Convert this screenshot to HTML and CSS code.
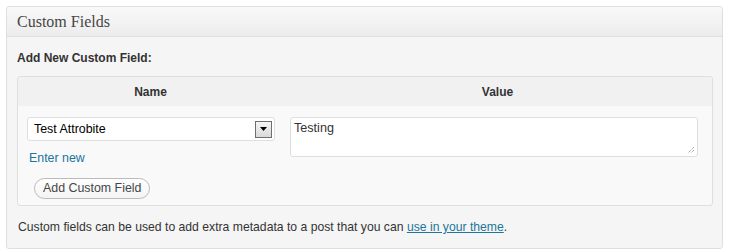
FILE: index.html
```html
<!DOCTYPE html>
<html>
<head>
<meta charset="utf-8">
<link rel="stylesheet" href="styles.css">
</head>
<body>
<div class="postbox">
  <h3 class="hndle">Custom Fields</h3>
  <div class="inside">
    <p class="add-new"><strong>Add New Custom Field:</strong></p>
    <div class="meta-table">
      <div class="thead">
        <div class="th name-col">Name</div>
        <div class="th value-col">Value</div>
      </div>
      <div class="tbody">
        <div class="name-col cell-left">
          <div class="select">
            <span class="select-text">Test Attrobite</span>
            <span class="select-btn"><svg width="8" height="5" viewBox="0 0 8 5"><path d="M0 0h7L3.5 4z" fill="#000"/></svg></span>
          </div>
          <a class="enter-new" href="#">Enter new</a>
          <span class="btn">Add Custom Field</span>
        </div>
        <div class="value-col cell-right">
          <div class="textarea">Testing
            <svg class="grip" width="8" height="8" viewBox="0 0 8 8"><path d="M7 1L1 7M7 4L4 7" stroke="#888" stroke-width="1" stroke-dasharray="1 1"/></svg>
          </div>
        </div>
      </div>
    </div>
    <p class="note">Custom fields can be used to add extra metadata to a post that you can <a href="#">use in your theme</a>.</p>
  </div>
</div>
</body>
</html>
```
FILE: styles.css
```css
html, body { margin: 0; padding: 0; background: #fff; }
body { padding: 6px 6px 0 6px; font-family: "Liberation Sans", Arial, sans-serif; color: #333; font-size: 13px; }
.postbox {
  width: 717px;
  border: 1px solid #dfdfdf;
  border-radius: 3px;
  background: #f5f5f5;
  box-sizing: border-box;
  height: 243px;
}
.hndle {
  margin: 0;
  height: 30px;
  box-sizing: border-box;
  padding: 6px 10px 0 10px;
  font-family: "Liberation Serif", Georgia, serif;
  font-weight: normal;
  font-size: 16px;
  color: #464646;
  background: linear-gradient(to bottom, #f9f9f9, #ececec);
  border-bottom: 1px solid #dfdfdf;
  border-radius: 3px 3px 0 0;
}
.inside { padding: 0 9px 0 10px; }
.add-new { margin: 13px 0 0 0; font-size: 12px; color: #333; line-height: 16px; }
.meta-table {
  margin-top: 10px;
  border: 1px solid #dfdfdf;
  border-radius: 3px;
  background: #f9f9f9;
  height: 130px;
  box-sizing: border-box;
}
.thead { display: flex; background: #f1f1f1; height: 29px; align-items: center; border-radius: 3px 3px 0 0; }
.th { text-align: center; font-weight: bold; font-size: 12px; color: #333; }
.name-col { width: 265px; flex: none; }
.value-col { flex: 1; }
.tbody { display: flex; padding-top: 11px; }
.cell-left { padding-left: 9px; box-sizing: border-box; display: flex; flex-direction: column; align-items: flex-start; }
.select {
  width: 248px; height: 24px; box-sizing: border-box;
  border: 1px solid #dfdfdf; border-radius: 3px; background: #fff;
  display: flex; align-items: center; justify-content: space-between;
  padding: 0 2px 0 6px; color: #000; font-size: 12.4px;
}
.select-btn {
  width: 17px; height: 17px; box-sizing: border-box;
  border: 1px solid #6f6f6f;
  background: linear-gradient(to bottom, #f5f5f5, #d9d9d9);
  display: flex; align-items: center; justify-content: center;
}
.enter-new { margin-top: 9px; margin-left: 2px; color: #21759b; text-decoration: none; font-size: 12.4px; line-height: 16px; }
.btn {
  margin-top: 12px; margin-left: 7px;
  display: inline-block; height: 21px; box-sizing: border-box;
  border: 1px solid #bbb; border-radius: 11px;
  padding: 0 8px; line-height: 19px; font-size: 12.4px; color: #464646;
  background: linear-gradient(to bottom, #fefefe, #f4f4f4);
}
.cell-right { padding-left: 7px; padding-right: 14px; }
.textarea {
  position: relative;
  height: 40px; box-sizing: border-box;
  border: 1px solid #dfdfdf; border-radius: 3px; background: #fff;
  padding: 3px 3px; color: #333; font-size: 12.6px;
}
.grip { position: absolute; right: 2px; bottom: 2px; }
.note { margin: 14px 0 0 1px; font-size: 12.2px; color: #333; }
.note a { color: #21759b; }
```
